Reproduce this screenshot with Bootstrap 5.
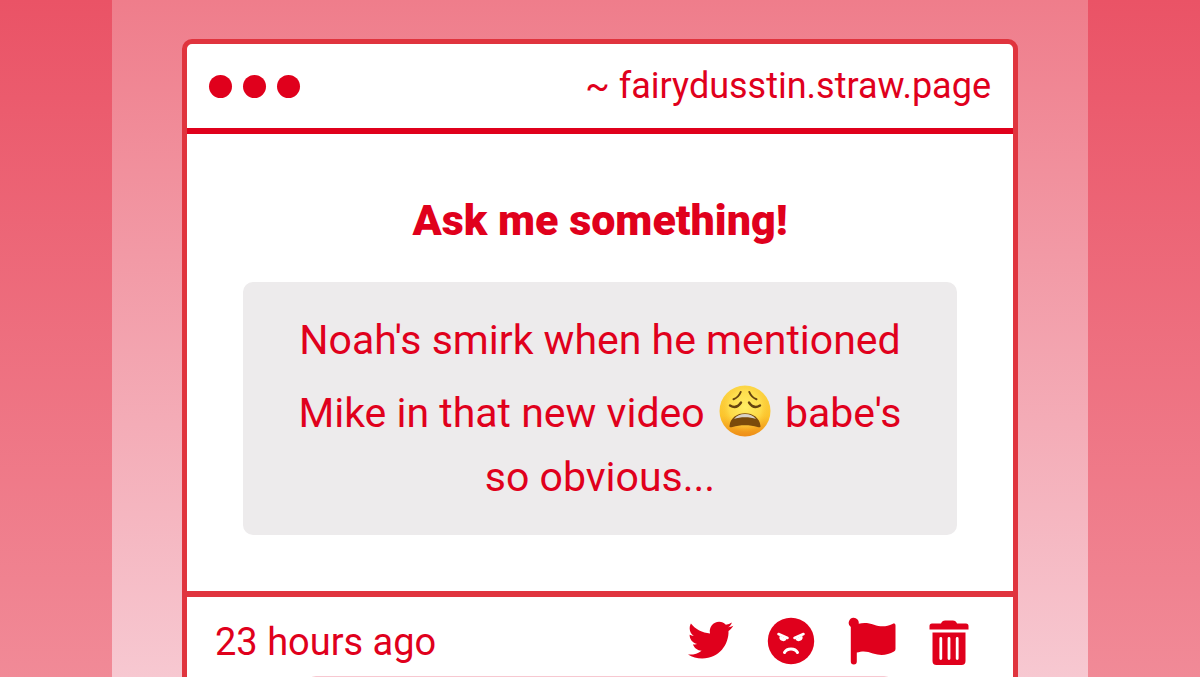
<!DOCTYPE html>
<html lang="en">
<head>
<meta charset="utf-8">
<meta name="viewport" content="width=device-width, initial-scale=1">
<title>Ask me something!</title>
<link href="https://cdn.jsdelivr.net/npm/bootstrap@5.3.0/dist/css/bootstrap.min.css" rel="stylesheet">
<style>
  :root { --ink: #e0001c; --frame: #e0343e; }
  html { scrollbar-width: none; }
  body {
    font-family: Roboto, "Liberation Sans", sans-serif;
    color: var(--ink);
    background: linear-gradient(#ea5366, #f18a97) fixed;
  }
  .backdrop {
    max-width: 976px;
    padding: 39px 70px;
    background: linear-gradient(#ef7d8b, #f7c8d1) fixed;
  }
  .window { border: 5px solid var(--frame); border-radius: 10px; }
  .title-bar { min-height: 90px; padding: 0 22px; border-bottom: 6px solid var(--ink); }
  .dot { width: 23px; height: 23px; background: var(--ink); }
  .dots { gap: 11px; }
  .site-link { font-size: 36px; color: var(--ink); }
  .question-area { padding: 56px; }
  .prompt { font-size: 43px; line-height: 60px; font-weight: 900; margin-bottom: 32px; }
  .question { font-size: 41px; line-height: 64px; padding: 26px 48px; background: #edebec; border-radius: 10px; }
  .emoji { width: 52px; height: 52px; vertical-align: -10px; margin: 13px 4px 0; }
  .foot { border-top: 6px solid var(--frame); }
  .meta-row { min-height: 79px; padding: 10px 44px 0 28px; }
  .age { font-size: 38px; line-height: 60px; }
  .actions { gap: 33px; padding-bottom: 2px; }
  .icon-btn { color: var(--ink); line-height: 1; }
  .icon-btn svg { display: block; height: 48px; fill: currentColor; }
  .reply { width: 588px; max-width: 80%; height: 64px; background: #f7c8d1; color: var(--ink); border-radius: 10px; font-size: 28px; }
</style>
</head>
<body>
<main class="backdrop mx-auto min-vh-100">
  <article class="window bg-white overflow-hidden">
    <header class="title-bar d-flex align-items-center justify-content-between">
      <div class="dots d-flex" aria-hidden="true">
        <span class="dot rounded-circle"></span>
        <span class="dot rounded-circle"></span>
        <span class="dot rounded-circle"></span>
      </div>
      <a class="site-link text-decoration-none" href="#">~ fairydusstin.straw.page</a>
    </header>

    <section class="question-area text-center">
      <h1 class="prompt">Ask me something!</h1>
      <p class="question mb-0">Noah's smirk when he mentioned<br>Mike in that new video
        <svg class="emoji" viewBox="0 0 52 52" role="img" aria-label="weary face">
          <defs>
            <linearGradient id="skin" x1="0" y1="0" x2="0" y2="1">
              <stop offset="0" stop-color="#fbd84a"/><stop offset=".6" stop-color="#fcc42c"/><stop offset="1" stop-color="#ee8c17"/>
            </linearGradient>
            <radialGradient id="glow" cx=".5" cy=".42" r=".5">
              <stop offset="0" stop-color="#ffee65"/><stop offset=".65" stop-color="#ffe252" stop-opacity=".7"/><stop offset="1" stop-color="#fbc02d" stop-opacity="0"/>
            </radialGradient>
          </defs>
          <circle cx="26" cy="26" r="25.5" fill="url(#skin)"/>
          <circle cx="26" cy="26" r="25" fill="url(#glow)"/>
          <g fill="none" stroke="#66430f" stroke-width="2" stroke-linecap="round">
            <path d="M14.5 14.2Q19.5 12.500 21.700 7M37.500 14.200Q32.500 12.500 30.300 7"/>
            <path d="M11 20.500Q17.500 24.500 22 17.500M41 20.500Q34.500 24.500 30 17.500" stroke-width="2.400"/>
          </g>
          <path d="M10.500 41C11.300 33 18 28.300 26 28.300S40.700 33 41.500 41C41.700 42.800 40 42.400 38.500 41.900C31 39.600 21 39.600 13.500 41.900C12 42.400 10.300 42.800 10.500 41Z" fill="#7a4a0b"/>
          <path d="M15 34C17.500 30.500 21.500 29 26 29S34.500 30.500 37 34C31 31.500 21 31.500 15 34Z" fill="#d8d2c8"/>
        </svg>
        babe's<br>so obvious...</p>
    </section>

    <footer class="foot">
      <div class="meta-row d-flex align-items-center justify-content-between">
        <span class="age">23 hours ago</span>
        <div class="actions d-flex align-items-center">
          <button type="button" class="icon-btn btn border-0 p-0" aria-label="Share on Twitter">
            <svg width="47" viewBox="0 0 47 48"><path d="M46.300 8.800C44.700 9.600 43 10 41.100 10.300C43 9.200 44.200 7.600 44.900 5.500C43 6.600 41.100 7.400 38.900 7.800C37.100 5.900 34.800 4.800 32.200 4.800C26.200 4.800 21.700 10.300 23 16.400C15.300 16 8.500 12.300 3.900 6.500C1.500 10.800 2.700 16.200 6.800 19C5.300 18.900 3.900 18.500 2.600 17.800C2.500 22.100 5.600 26.100 10.100 27.100C8.700 27.500 7.300 27.500 5.900 27.200C7.100 30.900 10.500 33.600 14.600 33.700C10.700 36.700 5.900 38 1 37.500C5.100 40.100 10 41.600 15.200 41.600C32.400 41.600 42 27.100 41.500 14.100C43.300 12.700 45 10.900 46.300 8.800Z"/></svg>
          </button>
          <button type="button" class="icon-btn btn border-0 p-0" aria-label="Block sender">
            <svg width="48" viewBox="0 0 48 48"><circle cx="24" cy="24" r="23.200"/>
              <g fill="none" stroke="#fff" stroke-linecap="round"><path d="M11.500 17L20.500 21M36.500 17L27.500 21" stroke-width="2.600"/><path d="M17.500 35.500C20 30.800 28 30.800 30.500 35.500" stroke-width="3"/></g>
              <path d="M12.800 18.800L19.800 21.800A3.600 3.600 0 1 1 12.800 18.800ZM35.200 18.800L28.200 21.800A3.600 3.600 0 1 0 35.200 18.800Z" fill="#fff"/></svg>
          </button>
          <button type="button" class="icon-btn btn border-0 p-0" aria-label="Report">
            <svg width="48" viewBox="0 0 48 48"><path d="M5.500.8A5.100 5.100 0 0 0 2.800 10V44.500A3 3 0 0 0 8.800 44.500V35.600C15 33.600 19.500 34.300 25 36.500C32.500 39 39.500 38.300 46 34.500Q47.500 33.600 47.500 32V8.500C47.500 6.600 46 6.200 44.500 6.900C38.500 9.800 32.500 9.900 26 7.700C20.500 5.900 15.500 5.700 10.700 6.800A5.100 5.100 0 0 0 5.500.8Z"/></svg>
          </button>
          <button type="button" class="icon-btn btn border-0 p-0" aria-label="Delete">
            <svg width="40" viewBox="0 0 40 48"><path d="M12.500 5.500Q13.500 3.500 16 3.500H24Q26.500 3.500 27.500 5.500L28 6.500H37Q39.500 6.500 39.500 9V12.500H.5V9Q.5 6.500 3 6.500H12ZM3.500 15.500H36.500V44Q36.500 48 32.500 48H7.500Q3.500 48 3.500 44Z"/><path d="M11.800 21.500V41.500M20 21.500V41.500M28.200 21.500V41.500" stroke="#fff" stroke-width="2.800" stroke-linecap="round"/></svg>
          </button>
        </div>
      </div>
      <button type="button" class="reply btn d-block mx-auto border-0" aria-label="Reply"></button>
    </footer>
  </article>
</main>
<script src="https://cdn.jsdelivr.net/npm/bootstrap@5.3.0/dist/js/bootstrap.bundle.min.js"></script>
</body>
</html>
